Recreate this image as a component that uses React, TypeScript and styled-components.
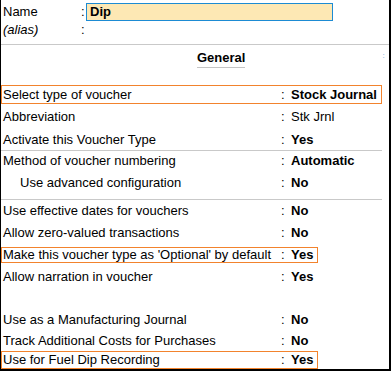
import React from "react";
import styled, { createGlobalStyle } from "styled-components";

const Global = createGlobalStyle`
  html, body { margin: 0; padding: 0; background: #ffffff; }
  body { font-family: "Liberation Sans", Arial, sans-serif; font-size: 13px; color: #000; }
`;

const Frame = styled.div`
  box-sizing: border-box;
  width: 391px;
  height: 371px;
  border-left: 1px solid #000;
  border-right: 2px solid #000;
  border-bottom: 2px solid #000;
  display: flex;
  flex-direction: column;
  overflow: hidden;
`;

const Header = styled.div`
  display: flex;
  flex-direction: column;
  padding: 3px 0 0 2px;
`;

const HeaderRow = styled.div`
  display: grid;
  grid-template-columns: 78px 5px 247px;
  height: 18px;
  line-height: 18px;
  align-items: center;
`;

const HeaderLabel = styled.span<{ $italic?: boolean }>`
  font-style: ${(p) => (p.$italic ? "italic" : "normal")};
`;

const Colon = styled.span`
  line-height: inherit;
`;

const NameInput = styled.div`
  box-sizing: border-box;
  height: 18px;
  line-height: 16px;
  background: #fde8b4;
  border: 1px solid #1d8bd3;
  padding-left: 3px;
  font-weight: bold;
`;

const Rule = styled.div<{ $w: number; $mt: number }>`
  height: 1px;
  width: ${(p) => p.$w}px;
  background: #c9c9c9;
  margin-top: ${(p) => p.$mt}px;
  flex: none;
`;

const Heading = styled.div`
  display: flex;
  align-items: flex-start;
  padding: 4px 0 0 196px;
  height: 19px;
  box-sizing: content-box;
`;

const HeadingText = styled.span`
  display: inline-block;
  font-weight: bold;
  line-height: 18px;
  border-bottom: 1px solid #c4c4c4;
`;

const Mark = styled.span`
  margin-left: 137px;
  margin-top: 3px;
  font-size: 8px;
  line-height: 8px;
  color: #5ba3d9;
`;

const Row = styled.div<{ $h: number; $mt: number; $hl?: boolean }>`
  box-sizing: border-box;
  display: flex;
  align-items: center;
  width: fit-content;
  flex: none;
  height: ${(p) => p.$h}px;
  line-height: ${(p) => p.$h - 2}px;
  margin-top: ${(p) => p.$mt}px;
  border: 1px solid ${(p) => (p.$hl ? "#f2832d" : "transparent")};
  padding: 0 4px 0 1px;
  white-space: nowrap;
`;

const Label = styled.span<{ $indent?: boolean }>`
  box-sizing: border-box;
  width: 278px;
  padding-left: ${(p) => (p.$indent ? 17 : 0)}px;
`;

const RowColon = styled.span`
  width: 10px;
`;

const Value = styled.span<{ $bold?: boolean }>`
  font-weight: ${(p) => (p.$bold ? "bold" : "normal")};
`;

type Item =
  | { kind: "row"; label: string; value: string; bold?: boolean; indent?: boolean; hl?: boolean; h: number; mt: number }
  | { kind: "sep"; mt: number };

const items: Item[] = [
  { kind: "row", label: "Select type of voucher", value: "Stock Journal", bold: true, hl: true, h: 19, mt: 17 },
  { kind: "row", label: "Abbreviation", value: "Stk Jrnl", h: 19, mt: 3 },
  { kind: "row", label: "Activate this Voucher Type", value: "Yes", bold: true, h: 19, mt: 4 },
  { kind: "sep", mt: 1 },
  { kind: "row", label: "Method of voucher numbering", value: "Automatic", bold: true, h: 19, mt: 0 },
  { kind: "row", label: "Use advanced configuration", value: "No", bold: true, indent: true, h: 19, mt: 3 },
  { kind: "sep", mt: 7 },
  { kind: "row", label: "Use effective dates for vouchers", value: "No", bold: true, h: 19, mt: 1 },
  { kind: "row", label: "Allow zero-valued transactions", value: "No", bold: true, h: 19, mt: 3 },
  { kind: "row", label: "Make this voucher type as 'Optional' by default", value: "Yes", bold: true, hl: true, h: 16, mt: 5 },
  { kind: "row", label: "Allow narration in voucher", value: "Yes", bold: true, h: 19, mt: 4 },
  { kind: "row", label: "Use as a Manufacturing Journal", value: "No", bold: true, h: 19, mt: 24 },
  { kind: "row", label: "Track Additional Costs for Purchases", value: "No", bold: true, h: 19, mt: 2 },
  { kind: "row", label: "Use for Fuel Dip Recording", value: "Yes", bold: true, hl: true, h: 18, mt: 1 },
];

export default function App() {
  return (
    <>
      <Global />
      <Frame>
        <Header>
          <HeaderRow>
            <HeaderLabel>Name</HeaderLabel>
            <Colon>:</Colon>
            <NameInput>Dip</NameInput>
          </HeaderRow>
          <HeaderRow>
            <HeaderLabel $italic>(alias)</HeaderLabel>
            <Colon>:</Colon>
            <span />
          </HeaderRow>
        </Header>
        <Rule $w={388} $mt={5} />
        <Heading>
          <HeadingText>General</HeadingText>
          <Mark>:</Mark>
        </Heading>
        {items.map((it, i) =>
          it.kind === "sep" ? (
            <Rule key={i} $w={381} $mt={it.mt} />
          ) : (
            <Row key={i} $h={it.h} $mt={it.mt} $hl={it.hl}>
              <Label $indent={it.indent}>{it.label}</Label>
              <RowColon>:</RowColon>
              <Value $bold={it.bold}>{it.value}</Value>
            </Row>
          )
        )}
      </Frame>
    </>
  );
}
